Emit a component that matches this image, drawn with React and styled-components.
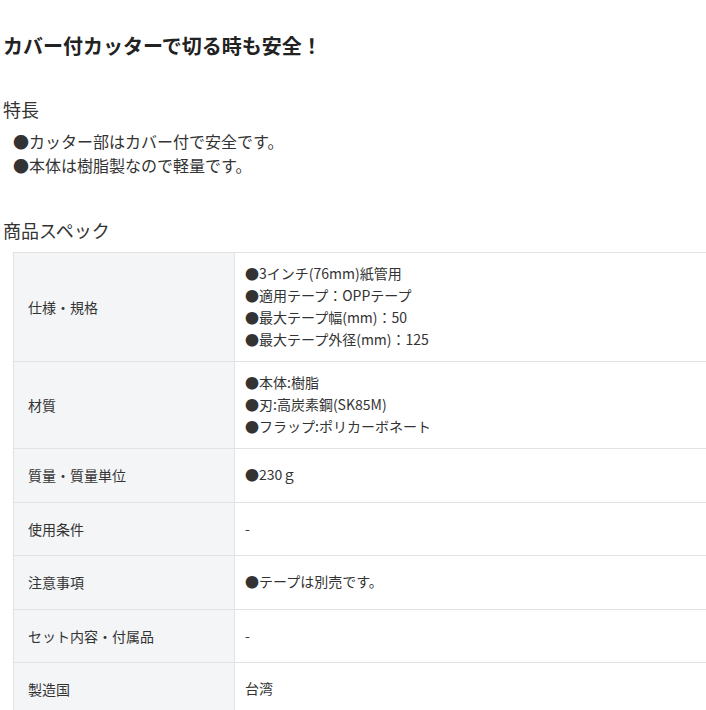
import React from 'react';
import styled, { createGlobalStyle } from 'styled-components';

const GlobalStyle = createGlobalStyle`
    body {
        margin: 0;
        background: #ffffff;
        color: #333333;
        font-family: "Noto Sans CJK JP", "Noto Sans", sans-serif;
    }
`;

const Page = styled.div`
    padding: 31px 0 0 3px;
    overflow: hidden;
`;

const Title = styled.h1`
    margin: 0;
    font-size: 20px;
    line-height: 30px;
    font-weight: bold;
    color: #222222;
`;

const SectionHeading = styled.h2`
    margin: ${props => props.top}px 0 0;
    font-size: 18px;
    line-height: 26px;
    font-weight: normal;
    color: #333333;
`;

const FeatureList = styled.ul`
    list-style: none;
    margin: 7px 0 0;
    padding: 0 0 0 10px;

    li {
        font-size: 16px;
        line-height: 24px;
    }
`;

const SpecTable = styled.table`
    margin: 9px 0 0 10px;
    width: 693px;
    border-collapse: collapse;
    font-size: 14px;
    line-height: 22px;
    color: #333333;
`;

const LabelCell = styled.th`
    width: 192px;
    height: 32.5px;
    padding: 10px 14px;
    text-align: left;
    font-weight: normal;
    vertical-align: middle;
    background: #f4f5f7;
    border: 1px solid #e2e2e2;
`;

const ValueCell = styled.td`
    padding: 9px 10px 11px;
    vertical-align: middle;
    border: 1px solid #e2e2e2;
    border-right: none;
`;

const specs = [
    ['仕様・規格', ['●3インチ(76mm)紙管用', '●適用テープ：OPPテープ', '●最大テープ幅(mm)：50', '●最大テープ外径(mm)：125']],
    ['材質', ['●本体:樹脂', '●刃:高炭素鋼(SK85M)', '●フラップ:ポリカーボネート']],
    ['質量・質量単位', ['●230ｇ']],
    ['使用条件', ['-']],
    ['注意事項', ['●テープは別売です。']],
    ['セット内容・付属品', ['-']],
    ['製造国', ['台湾']],
];

export default function App() {
    return (
        <Page>
            <GlobalStyle />
            <Title>カバー付カッターで切る時も安全！</Title>

            <SectionHeading top={35}>特長</SectionHeading>
            <FeatureList>
                <li>●カッター部はカバー付で安全です。</li>
                <li>●本体は樹脂製なので軽量です。</li>
            </FeatureList>

            <SectionHeading top={40}>商品スペック</SectionHeading>
            <SpecTable>
                <tbody>
                    {specs.map(([label, lines]) => (
                        <tr key={label}>
                            <LabelCell>{label}</LabelCell>
                            <ValueCell>
                                {lines.map((line, i) => (
                                    <div key={i}>{line}</div>
                                ))}
                            </ValueCell>
                        </tr>
                    ))}
                </tbody>
            </SpecTable>
        </Page>
    );
}
